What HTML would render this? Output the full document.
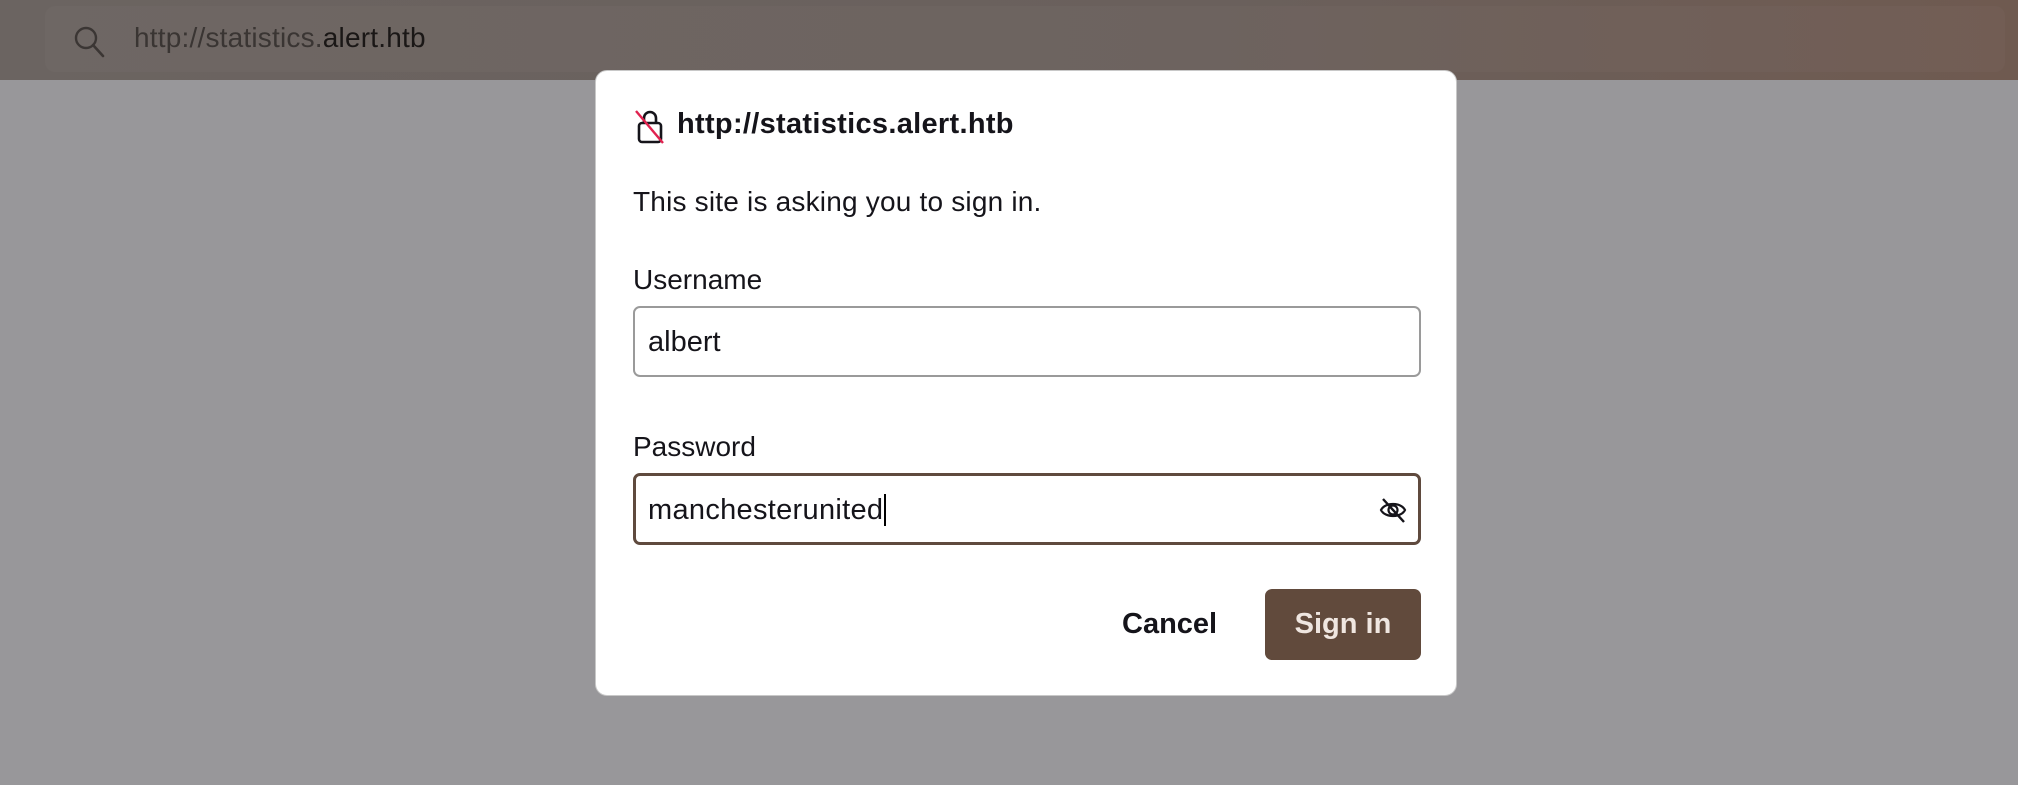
<!DOCTYPE html>
<html><head><meta charset="utf-8"><style>
*{margin:0;padding:0;box-sizing:border-box}
body{width:2018px;height:785px;background:#98979a;font-family:"Liberation Sans",sans-serif;position:relative;overflow:hidden;color:#15141a}
.tb{position:absolute;left:0;top:0;width:2018px;height:80px;background:linear-gradient(90deg,#6b6461,#6a605c 60%,#6f5a50)}
.url{position:absolute;left:45px;top:6px;width:1960px;height:66px;border-radius:10px;background:rgba(255,255,255,0.025)}
.ut{position:absolute;left:134px;top:22px;font-size:28px;color:#3a3533;letter-spacing:0.2px}
.ut b{font-weight:normal;color:#1a1716}
.dlg{position:absolute;left:595px;top:70px;width:862px;height:626px;background:#fff;border-radius:12px;border:1px solid #c8c8c8}
.abs{position:absolute}
.inp{position:absolute;left:37px;width:788px;border-radius:7px;background:#fff}
</style></head><body>
<div class="tb"><div class="url">
<svg class="abs" style="left:28px;top:19px" width="34" height="34" viewBox="0 0 34 34"><circle cx="13" cy="13" r="10" fill="none" stroke="#3b3634" stroke-width="2.4"/><line x1="20" y1="20" x2="30" y2="31" stroke="#3b3634" stroke-width="2.6" stroke-linecap="round"/></svg>
</div><div class="ut">http://statistics.<b>alert.htb</b></div></div>
<div class="dlg">
<svg class="abs" style="left:37px;top:37px" width="34" height="37" viewBox="0 0 34 37"><path d="M11 15V10a6 6 0 0 1 12 0v5" fill="none" stroke="#15141a" stroke-width="2.6"/><rect x="6" y="15" width="22" height="19" rx="3" fill="none" stroke="#15141a" stroke-width="2.6"/><line x1="3" y1="3" x2="30" y2="35" stroke="#e0224f" stroke-width="2.4"/></svg>
<div class="abs" style="left:81px;top:37px;font-size:29px;font-weight:bold;letter-spacing:0.3px">http://statistics.alert.htb</div>
<div class="abs" style="left:37px;top:115px;font-size:28px;letter-spacing:0.2px">This site is asking you to sign in.</div>
<div class="abs" style="left:37px;top:193px;font-size:28px">Username</div>
<div class="inp" style="top:235px;height:71px;border:2px solid #9a9a9a"><div class="abs" style="left:13px;top:18px;font-size:29px">albert</div></div>
<div class="abs" style="left:37px;top:360px;font-size:28px">Password</div>
<div class="inp" style="top:402px;height:72px;border:3px solid #5f4a3e"><div class="abs" style="left:12px;top:18px;font-size:29px;letter-spacing:0.3px">manchesterunited<span style="border-left:2px solid #000;margin-left:1px"></span></div>
<svg class="abs" style="left:742px;top:20px" width="30" height="28" viewBox="0 0 30 28"><path d="M3 14C7 6 23 6 27 14C23 22 7 22 3 14Z" fill="none" stroke="#15141a" stroke-width="2.2"/><circle cx="15" cy="14" r="4.5" fill="none" stroke="#15141a" stroke-width="2.2"/><line x1="5" y1="3" x2="26" y2="26" stroke="#15141a" stroke-width="2.4"/></svg></div>
<div class="abs" style="left:526px;top:537px;font-size:29px;font-weight:bold">Cancel</div>
<div class="abs" style="left:669px;top:518px;width:156px;height:71px;background:#614a3c;border-radius:7px;color:#efe6e0;font-size:29px;font-weight:bold;text-align:center;line-height:71px">Sign in</div>
</div>
</body></html>
